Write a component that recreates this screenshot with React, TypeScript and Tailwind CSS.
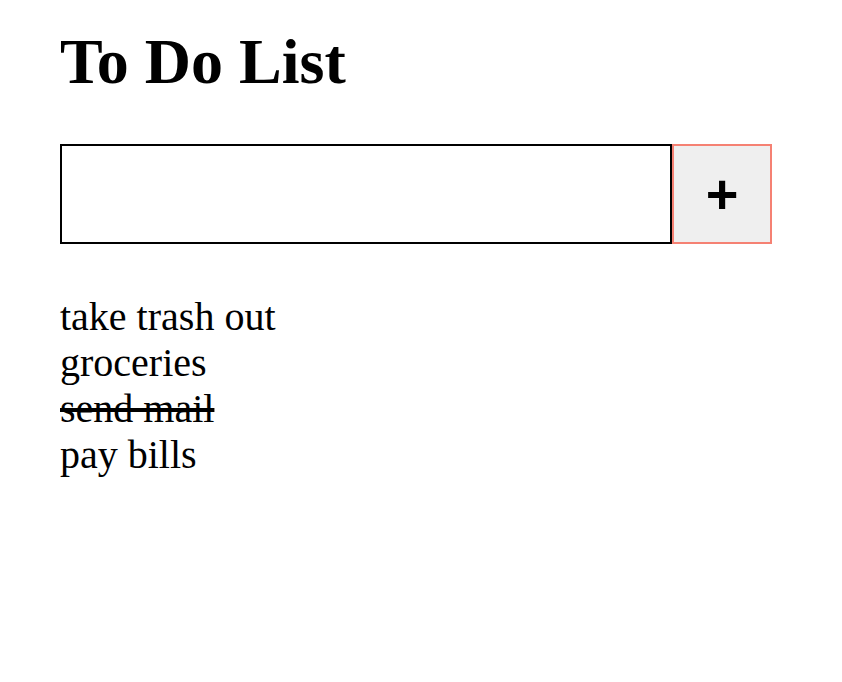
import { useState } from "react";

const initial = [
  { text: "take trash out", done: false },
  { text: "groceries", done: false },
  { text: "send mail", done: true },
  { text: "pay bills", done: false },
];

export default function App() {
  const [items, setItems] = useState(initial);
  const [draft, setDraft] = useState("");

  const add = () => {
    if (!draft.trim()) return;
    setItems((xs) => [...xs, { text: draft.trim(), done: false }]);
    setDraft("");
  };

  return (
    <div className="min-h-screen bg-white px-[60px] text-black font-['Liberation_Serif',serif]">
      <h1 className="pt-[26px] text-[64px] font-bold leading-[72px]">To Do List</h1>

      <div className="mt-[46px] flex">
        <input
          value={draft}
          onChange={(e) => setDraft(e.target.value)}
          className="h-[100px] w-[612px] border-2 border-black bg-white px-2 text-[40px] outline-none"
        />
        <button
          type="button"
          onClick={add}
          className="flex h-[100px] w-[100px] items-center justify-center border-2 border-[#f58173] bg-[#efefef] font-['Liberation_Sans',sans-serif] text-[56px] font-bold leading-none"
        >
          +
        </button>
      </div>

      <ul className="mt-[50px] text-[40px] leading-[46px]">
        {items.map((it, i) => (
          <li
            key={i}
            onClick={() => setItems((xs) => xs.map((x, j) => (j === i ? { ...x, done: !x.done } : x)))}
            className={it.done ? "line-through" : ""}
          >
            {it.text}
          </li>
        ))}
      </ul>
    </div>
  );
}
